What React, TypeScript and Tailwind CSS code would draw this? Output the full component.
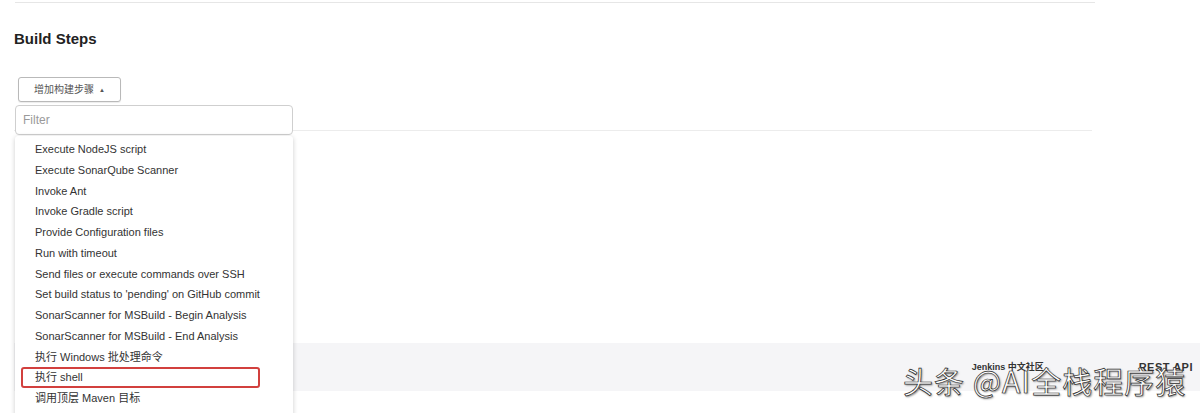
const steps = [
  'Execute NodeJS script',
  'Execute SonarQube Scanner',
  'Invoke Ant',
  'Invoke Gradle script',
  'Provide Configuration files',
  'Run with timeout',
  'Send files or execute commands over SSH',
  "Set build status to 'pending' on GitHub commit",
  'SonarScanner for MSBuild - Begin Analysis',
  'SonarScanner for MSBuild - End Analysis',
  '执行 Windows 批处理命令',
  '执行 shell',
  '调用顶层 Maven 目标',
]

const font = "font-['Liberation_Sans','Noto_Sans_CJK_SC',sans-serif]"

export default function App() {
  return (
    <div className={`relative h-[413px] w-[1200px] overflow-hidden bg-white ${font}`}>
      {/* section */}
      <div className="pl-[14px]">
        <div className="ml-[1px] mt-[2px] h-px w-[1080px] bg-[#e6e6e6]" />
        <h2 className="mt-[26px] text-[15px] font-bold leading-[20px] text-[#222]">Build Steps</h2>
        <button
          type="button"
          className="ml-[4px] mt-[28px] flex h-[25px] w-[103px] items-center justify-center gap-[5px] rounded-[3px] border border-[#b9b9b9] bg-white text-[10px] text-[#555] shadow-[0_1px_1px_rgba(0,0,0,0.08)]"
        >
          增加构建步骤
          <span className="text-[6px] leading-none">▲</span>
        </button>
        <div className="mt-[28px] h-px w-[1078px] bg-[#ececec]" />
      </div>

      {/* footer */}
      <div className="ml-[14px] mt-[212px] flex h-[48px] items-start bg-[#f5f5f7] pt-[17px] font-bold text-[#333]">
        <div className="flex-1" />
        <span className="w-[167px] text-[9px] leading-[14px]">Jenkins 中文社区</span>
        <span className="mr-[7px] text-[11px] leading-[14px] tracking-[0.5px]">REST API</span>
      </div>

      {/* dropdown menu */}
      <div className="absolute left-[15px] top-[105px] w-[278px]">
        <div className="flex h-[30px] items-center rounded-[4px] border border-[#cfcfcf] bg-white px-[7px] text-[12px] text-[#9a9a9a]">
          Filter
        </div>
        <div className="mt-px h-[300px] rounded-[3px] bg-white pt-[3px] shadow-[0_1px_5px_rgba(0,0,0,0.2)]">
          {steps.map((s, i) => (
            <div key={s} className="relative flex h-[20.75px] items-center pl-[20px] text-[11px] text-[#333]">
              {s}
              {i === 11 && (
                <span className="absolute left-[6px] top-0 h-[21px] w-[239px] rounded-[3px] border-2 border-[#d2403e]" />
              )}
            </div>
          ))}
        </div>
      </div>

      {/* watermark */}
      <div className="absolute left-[903px] top-[362px] whitespace-nowrap font-['Noto_Sans_CJK_SC',sans-serif] text-[30px] leading-[36px] tracking-[1px] text-white [-webkit-text-stroke:0.7px_#2a2a2a] [text-shadow:1px_1px_2px_rgba(0,0,0,0.5)]">
        头条 @AI全栈程序猿
      </div>
    </div>
  )
}
